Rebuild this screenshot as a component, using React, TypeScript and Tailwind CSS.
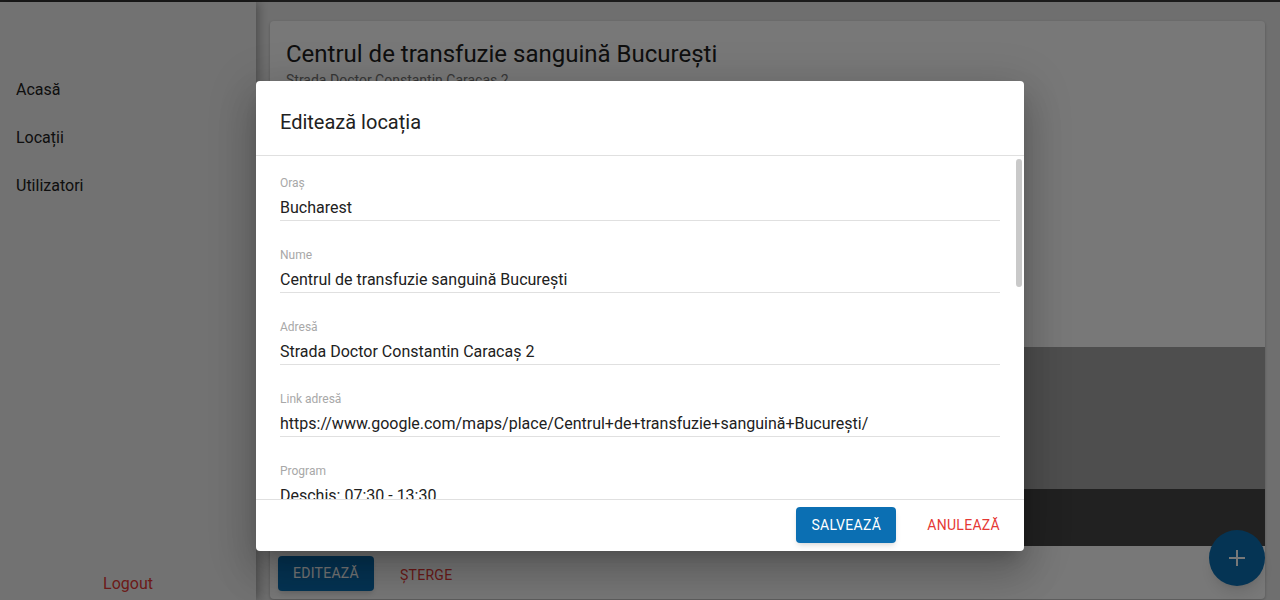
import React from "react";

const fields = [
  { label: "Oraș", value: "Bucharest" },
  { label: "Nume", value: "Centrul de transfuzie sanguină București" },
  { label: "Adresă", value: "Strada Doctor Constantin Caracaș 2" },
  {
    label: "Link adresă",
    value: "https://www.google.com/maps/place/Centrul+de+transfuzie+sanguină+București/",
  },
  { label: "Program", value: "Deschis: 07:30 - 13:30" },
  { label: "Telefon", value: "021 317 4044" },
];

const App: React.FC = () => {
  return (
    <div className="relative h-[600px] w-[1280px] overflow-hidden bg-[#ececec] font-['Roboto',sans-serif] text-[#212121]">
      <div className="h-[2px] bg-[#3a3a3a]" />
      <div className="flex h-[598px]">
        {/* Sidebar */}
        <aside className="relative z-10 flex w-[256px] shrink-0 flex-col bg-[#f3f3f3] shadow-[2px_0_10px_rgba(0,0,0,0.35)]">
          <nav className="mt-[64px] flex flex-col text-[16px]">
            <a className="flex h-[48px] items-center px-4">Acasă</a>
            <a className="flex h-[48px] items-center px-4">Locații</a>
            <a className="flex h-[48px] items-center px-4">Utilizatori</a>
          </nav>
          <div className="mt-auto flex h-[28px] items-start justify-center text-[16px] text-[#e53935]">
            Logout
          </div>
        </aside>

        {/* Main */}
        <main className="flex-1 pl-[14px] pr-[15px] pt-[19px]">
          <div className="overflow-hidden rounded bg-white shadow-[0_1px_3px_rgba(0,0,0,0.25)]">
            <div className="h-[326px] px-4 pt-[17px]">
              <h1 className="text-[24px] leading-[32px]">Centrul de transfuzie sanguină București</h1>
              <p className="text-[14px] leading-[20px] text-[#757575]">Strada Doctor Constantin Caracaș 2</p>
            </div>
            <div className="h-[142px] bg-[#a6a6a6]" />
            <div className="h-[57px] bg-[#474747]" />
            <div className="flex items-center gap-[10px] px-2 pb-2 pt-[9px]">
              <button className="h-[35px] w-[96px] rounded bg-[#0b6fb3] text-[14px] tracking-[0.02em] text-white shadow-md">
                EDITEAZĂ
              </button>
              <button className="h-[36px] px-4 pt-[4px] text-[14px] tracking-[0.02em] text-[#e53935]">ȘTERGE</button>
            </div>
          </div>
        </main>
      </div>

      <button className="absolute bottom-[14px] right-[15px] z-20 flex h-[56px] w-[56px] items-center justify-center rounded-full bg-[#0b6fb3] text-white shadow-lg">
        <svg width="20" height="20" viewBox="0 0 20 20">
          <path d="M10 2v16M2 10h16" stroke="currentColor" strokeWidth="2" />
        </svg>
      </button>

      {/* Overlay */}
      <div className="absolute inset-0 z-30 bg-black/[0.53]" />

      {/* Dialog */}
      <div className="absolute left-[256px] top-[81px] z-40 flex h-[470px] w-[768px] flex-col rounded bg-white shadow-[0_11px_15px_-7px_rgba(0,0,0,0.2),0_24px_38px_3px_rgba(0,0,0,0.14),0_9px_46px_8px_rgba(0,0,0,0.12)]">
        <div className="flex h-[75px] items-center border-b border-[#e0e0e0] px-6 pt-[8px]">
          <h2 className="text-[20px] font-normal leading-[28px]">Editează locația</h2>
        </div>
        <div className="relative flex-1 overflow-hidden px-6">
          {fields.map((f) => (
            <div key={f.label} className="mb-[7px] border-b border-[#e0e0e0] pt-[19px]">
              <div className="text-[12px] leading-[16px] text-[#a8a8a8]">{f.label}</div>
              <div className="mt-[4px] text-[16px] leading-[25px]">{f.value}</div>
            </div>
          ))}
          <div className="absolute right-[2px] top-[3px] h-[128px] w-[6px] rounded-full bg-[#c9c9c9]" />
        </div>
        <div className="flex h-[52px] items-start justify-end gap-[15px] border-t border-[#e0e0e0] pr-2 pt-[7px]">
          <button className="h-[36px] w-[100px] rounded bg-[#0b6fb3] text-[14px] tracking-[0.02em] text-white shadow-md">
            SALVEAZĂ
          </button>
          <button className="h-[36px] px-4 text-[14px] tracking-[0.02em] text-[#e53935]">ANULEAZĂ</button>
        </div>
      </div>
    </div>
  );
};

export default App;
